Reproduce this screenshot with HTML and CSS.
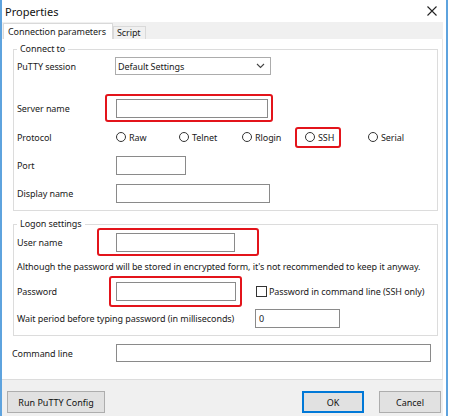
FILE: index.html
```html
<!DOCTYPE html>
<html lang="en">
<head>
  <meta charset="UTF-8" />
  <title>Properties</title>
  <link rel="stylesheet" href="styles.css">
</head>
<body>

  <div class="window">
    <div class="titlebar">
      <span class="title">Properties</span>
      <svg class="close" width="10" height="10" viewBox="0 0 10 10">
        <path d="M0.5 0.5 L9.5 9.5 M9.5 0.5 L0.5 9.5" stroke="#222" stroke-width="1.1" fill="none"/>
      </svg>
    </div>

    <div class="content">
      <div class="tabs">
        <div class="tab active">Connection parameters</div>
        <div class="tab">Script</div>
      </div>

      <div class="panel">
        <fieldset class="group connect">
          <legend>Connect to</legend>

          <div class="row r-session">
            <span class="label">PuTTY session</span>
            <div class="select">
              <span>Default Settings</span>
              <svg width="9" height="6" viewBox="0 0 9 6"><path d="M1 1 L4.5 4.5 L8 1" stroke="#444" stroke-width="1.1" fill="none"/></svg>
            </div>
          </div>

          <div class="row r-server">
            <span class="label">Server name</span>
            <div class="marked">
              <div class="input w-server"></div>
              <span class="mark m-server"></span>
            </div>
          </div>

          <div class="row r-protocol">
            <span class="label">Protocol</span>
            <div class="radios">
              <label class="radio"><span class="dot"></span>Raw</label>
              <label class="radio"><span class="dot"></span>Telnet</label>
              <label class="radio"><span class="dot"></span>Rlogin</label>
              <label class="radio marked"><span class="dot"></span>SSH<span class="mark m-ssh"></span></label>
              <label class="radio"><span class="dot"></span>Serial</label>
            </div>
          </div>

          <div class="row">
            <span class="label">Port</span>
            <div class="input w-port"></div>
          </div>

          <div class="row">
            <span class="label">Display name</span>
            <div class="input w-display"></div>
          </div>
        </fieldset>

        <fieldset class="group logon">
          <legend>Logon settings</legend>

          <div class="row r-user">
            <span class="label">User name</span>
            <div class="marked">
              <div class="input w-user"></div>
              <span class="mark m-user"></span>
            </div>
          </div>

          <p class="note">Although the password will be stored in encrypted form, it's not recommended to keep it anyway.</p>

          <div class="row r-password">
            <span class="label">Password</span>
            <div class="marked">
              <div class="input w-password"></div>
              <span class="mark m-password"></span>
            </div>
            <label class="check"><span class="box"></span>Password in command line (SSH only)</label>
          </div>

          <div class="row r-wait">
            <span class="wait-label">Wait period before typing password (in milliseconds)</span>
            <div class="input w-wait">0</div>
          </div>
        </fieldset>

        <div class="row r-command">
          <span class="label wide">Command line</span>
          <div class="input w-command"></div>
        </div>
      </div>

      <div class="footer">
        <button class="btn run">Run PuTTY Config</button>
        <div class="actions">
          <button class="btn default">OK</button>
          <button class="btn">Cancel</button>
        </div>
      </div>
    </div>
  </div>

</body>
</html>
```

FILE: styles.css
```css
* { margin: 0; padding: 0; box-sizing: border-box; }

body {
  font-family: 'Noto Sans', 'DejaVu Sans', sans-serif;
  font-size: 9px;
  letter-spacing: -0.08px;
  color: #1a1a1a;
  background: #fff;
  width: 450px;
  height: 416px;
  overflow: hidden;
}

.window {
  width: 448px;
  height: 416px;
  border-left: 2px solid #5ea3de;
  border-right: 2px solid #5ea3de;
  display: flex;
  flex-direction: column;
  background: #fff;
}

/* Title bar */
.titlebar {
  height: 22px;
  display: flex;
  align-items: center;
  justify-content: space-between;
  padding: 0 9px 0 3px;
}

.title {
  font-size: 11px;
  letter-spacing: 0;
  color: #111;
}

/* Body */
.content {
  flex: 1;
  display: flex;
  flex-direction: column;
  margin-right: 3px;
}

.tabs {
  height: 17px;
  background: #f0f0f0;
  display: flex;
  align-items: flex-end;
  padding-left: 1px;
}

.tab {
  height: 13px;
  line-height: 12px;
  padding: 0 4px 0 3px;
  border: 1px solid #d9d9d9;
  border-bottom: none;
  background: #f0f0f0;
}

.tab.active {
  height: 16px;
  line-height: 15px;
  background: #fff;
  padding: 0 6px 0 4px;
}

.panel {
  flex: 1;
  border-right: 1px solid #e6e6e6;
  border-bottom: 1px solid #dcdcdc;
  padding: 4px 4px 0 10px;
}

.group {
  min-width: 0;
  border: 1px solid #dcdcdc;
  margin-left: 1px;
  padding: 0 3px 3px 3px;
}

.group legend {
  line-height: 12px;
  padding: 0 3px;
}

.logon { margin-top: 7px; }

.row {
  display: flex;
  align-items: center;
  height: 28px;
}

.label {
  width: 99px;
  flex-shrink: 0;
}

.label.wide { width: 104px; }

.r-session { height: 22px; margin-bottom: 17px; }
.r-protocol { margin-top: 1px; }

.select {
  width: 156px;
  height: 18px;
  margin-left: -1px;
  border: 1px solid #acacac;
  display: flex;
  align-items: center;
  justify-content: space-between;
  padding: 0 5px 0 2px;
}

.input {
  height: 19px;
  border: 1px solid #8a8a8a;
  background: #fff;
  line-height: 17px;
  padding-left: 3px;
}

.w-server { width: 152px; }
.w-port { width: 70px; }
.w-display { width: 154px; }
.w-user { width: 119px; }
.w-password { width: 120px; }
.w-wait { width: 85px; }
.w-command { width: 315px; height: 18px; }

/* Red highlight annotations */
.marked { position: relative; }

.mark {
  position: absolute;
  border: 2px solid #e3141b;
  border-radius: 3px;
}

.m-server { left: -11px; top: -5px; right: -5px; bottom: -4px; }
.m-ssh { left: -10px; top: -4px; right: -7px; bottom: -4px; }
.m-user { left: -19px; top: -5px; right: -24px; bottom: -4px; }
.m-password { left: -7px; top: -6px; right: -6px; bottom: -6px; }

.radios {
  display: grid;
  grid-template-columns: repeat(5, 63px);
}

.radio {
  justify-self: start;
  display: flex;
  align-items: center;
  gap: 3px;
}

.dot {
  width: 10px;
  height: 10px;
  border: 1px solid #333;
  border-radius: 50%;
}

.r-user { height: 24px; }

.note {
  height: 26px;
  line-height: 26px;
  white-space: nowrap;
}

.r-password { height: 22px; }

.check {
  display: flex;
  align-items: center;
  gap: 2px;
  margin-left: 20px;
}

.box {
  width: 11px;
  height: 11px;
  border: 1px solid #333;
}

.r-wait { margin-top: 2px; }

.wait-label {
  width: 238px;
  flex-shrink: 0;
}

.r-command { height: 24px; margin-top: 5px; }

/* Footer */
.footer {
  height: 36px;
  background: #f0f0f0;
  display: flex;
  justify-content: space-between;
  padding: 11px 2px 0 5px;
}

.actions {
  display: flex;
  gap: 15px;
}

.btn {
  font: inherit;
  color: #111;
  height: 22px;
  width: 62px;
  background: #e1e1e1;
  border: 1px solid #adadad;
}

.btn.run { width: 98px; }

.btn.default {
  border: 2px solid #0078d7;
}
```
